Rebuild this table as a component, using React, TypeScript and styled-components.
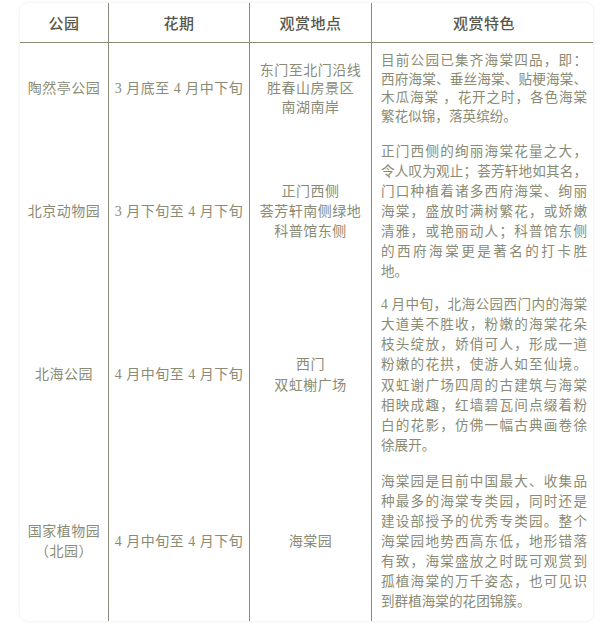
import styled, { createGlobalStyle } from 'styled-components';

const GlobalStyle = createGlobalStyle`
  body {
    margin: 0;
    background: #ffffff;
    -webkit-font-smoothing: antialiased;
  }
`;

type Row = {
  park: string[];
  period: string;
  place: string[];
  feature: string[];
  height: number;
  lh: number;
};

const rows: Row[] = [
  {
    park: ['陶然亭公园'],
    period: '3 月底至 4 月中下旬',
    place: ['东门至北门沿线', '胜春山房景区', '南湖南岸'],
    feature: [
      '目前公园已集齐海棠四品，即：',
      '西府海棠、垂丝海棠、贴梗海棠、',
      '木瓜海棠 ，花开之时，各色海棠',
      '繁花似锦，落英缤纷。',
    ],
    height: 93,
    lh: 18.5,
  },
  {
    park: ['北京动物园'],
    period: '3 月下旬至 4 月下旬',
    place: ['正门西侧', '荟芳轩南侧绿地', '科普馆东侧'],
    feature: [
      '正门西侧的绚丽海棠花量之大，',
      '令人叹为观止；荟芳轩地如其名，',
      '门口种植着诸多西府海棠、绚丽',
      '海棠，盛放时满树繁花，或娇嫩',
      '清雅，或艳丽动人；科普馆东侧',
      '的西府海棠更是著名的打卡胜',
      '地。',
    ],
    height: 152,
    lh: 20,
  },
  {
    park: ['北海公园'],
    period: '4 月中旬至 4 月下旬',
    place: ['西门', '双虹榭广场'],
    feature: [
      '4 月中旬，北海公园西门内的海棠',
      '大道美不胜收，粉嫩的海棠花朵',
      '枝头绽放，娇俏可人，形成一道',
      '粉嫩的花拱，使游人如至仙境。',
      '双虹谢广场四周的古建筑与海棠',
      '相映成趣，红墙碧瓦间点缀着粉',
      '白的花影，仿佛一幅古典画卷徐',
      '徐展开。',
    ],
    height: 176,
    lh: 20.2,
  },
  {
    park: ['国家植物园', '（北园）'],
    period: '4 月中旬至 4 月下旬',
    place: ['海棠园'],
    feature: [
      '海棠园是目前中国最大、收集品',
      '种最多的海棠专类园，同时还是',
      '建设部授予的优秀专类园。整个',
      '海棠园地势西高东低，地形错落',
      '有致，海棠盛放之时既可观赏到',
      '孤植海棠的万千姿态，也可见识',
      '到群植海棠的花团锦簇。',
    ],
    height: 157,
    lh: 20,
  },
];

const Page = styled.div`
  padding: 3px 7px 12px 20px;
`;

const Card = styled.div`
  width: 573px;
  background: #ffffff;
  border-radius: 8px;
  box-shadow: 0 0 3px rgba(60, 60, 40, 0.12);
  overflow: hidden;
`;

const Table = styled.table`
  width: 100%;
  border-collapse: collapse;
  table-layout: fixed;
`;

const HeadCell = styled.th<{ $w: number }>`
  width: ${(p) => p.$w}px;
  height: 39px;
  padding: 0;
  font-family: 'Noto Sans CJK SC', sans-serif;
  font-size: 15px;
  font-weight: 500;
  letter-spacing: 0.5px;
  color: #57584a;
  text-align: center;
  vertical-align: middle;
  border-bottom: 1px solid #8a8a78;

  & + & {
    border-left: 1px solid #8a8a78;
  }
`;

const BodyRow = styled.tr<{ $h: number; $lh: number }>`
  height: ${(p) => p.$h}px;
  line-height: ${(p) => p.$lh}px;

  & + & > td {
    border-top: 1px solid #8a8a78;
  }
`;

const Cell = styled.td<{ $text?: boolean }>`
  padding: ${(p) => (p.$text ? '0 9px 0 9px' : '0 4px')};
  font-family: 'Liberation Serif', 'Noto Sans CJK SC', serif;
  font-size: ${(p) => (p.$text ? '13.6px' : '14px')};
  font-weight: 400;
  letter-spacing: ${(p) => (p.$text ? '0' : '0.5px')};
  color: #8a8b74;
  text-align: center;
  vertical-align: middle;

  & + & {
    border-left: 1px solid #8a8a78;
  }
`;

const Line = styled.div<{ $last?: boolean }>`
  white-space: nowrap;
  text-align: ${(p) => (p.$last ? 'left' : 'justify')};
  text-align-last: ${(p) => (p.$last ? 'left' : 'justify')};
`;

const Centered = styled.div`
  white-space: nowrap;
`;

export default function App() {
  return (
    <>
      <GlobalStyle />
      <Page lang="zh-CN">
        <Card>
          <Table>
            <thead>
              <tr>
                <HeadCell $w={88}>公园</HeadCell>
                <HeadCell $w={140}>花期</HeadCell>
                <HeadCell $w={121}>观赏地点</HeadCell>
                <HeadCell $w={224}>观赏特色</HeadCell>
              </tr>
            </thead>
            <tbody>
              {rows.map((r) => (
                <BodyRow key={r.park[0]} $h={r.height} $lh={r.lh}>
                  <Cell>
                    {r.park.map((t) => (
                      <Centered key={t}>{t}</Centered>
                    ))}
                  </Cell>
                  <Cell>{r.period}</Cell>
                  <Cell>
                    {r.place.map((t) => (
                      <Centered key={t}>{t}</Centered>
                    ))}
                  </Cell>
                  <Cell $text>
                    {r.feature.map((t, i) => (
                      <Line key={i} $last={i === r.feature.length - 1}>
                        {t}
                      </Line>
                    ))}
                  </Cell>
                </BodyRow>
              ))}
            </tbody>
          </Table>
        </Card>
      </Page>
    </>
  );
}
